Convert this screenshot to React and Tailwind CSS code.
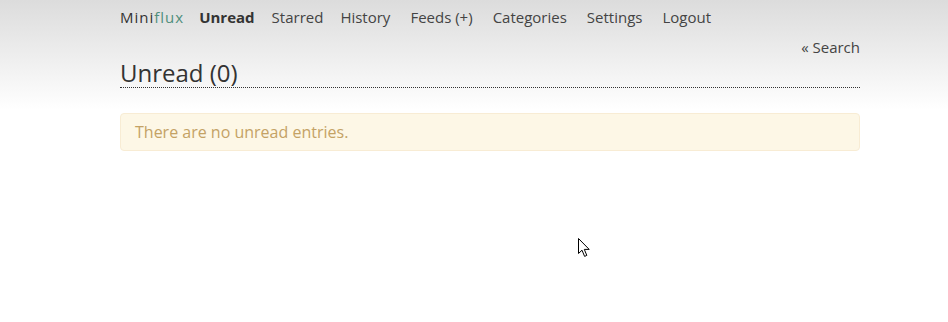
import React from "react"

const NAV = ["Starred", "History", "Feeds (+)", "Categories", "Settings", "Logout"]

function Cursor() {
  return (
    <svg className="absolute left-[578px] top-[238px]" width="13" height="20" viewBox="0 0 13 20">
      <path d="M0.5 0.5 L0.5 15.5 L4 12.2 L6.6 18.4 L8.8 17.4 L6.3 11.4 L11.2 11.4 Z" fill="#fff" stroke="#000" strokeWidth="1" />
    </svg>
  )
}

export default function App() {
  return (
    <div className="relative w-[948px] h-[322px] bg-white overflow-hidden" style={{ fontFamily: '"Open Sans", "Noto Sans", sans-serif' }}>
      <div className="bg-gradient-to-b from-[#dcdcdc] to-white h-[110px] absolute inset-x-0 top-0" />
      <div className="relative ml-[120px] w-[740px]">
        <nav className="flex items-center gap-[20px] h-[34px] text-[15px] text-[#444]">
          <span className="tracking-[1px] text-[#333]">
            Mini<span className="text-[#4f8f7c]">flux</span>
          </span>
          <span className="font-bold text-[#333] -ml-[5px]">Unread</span>
          <span className="-ml-[3px] -mr-[3px]">Starred</span>
          {NAV.slice(1).map((n) => (
            <span key={n}>{n}</span>
          ))}
        </nav>
        <div className="flex justify-end text-[15px] text-[#444] leading-[26px]">« Search</div>
        <h1 className="text-[24px] leading-[25px] pb-[2px] text-[#333] border-b border-dotted border-[#333]">Unread (0)</h1>
        <div className="mt-[25px] h-[38px] flex items-center px-[14px] bg-[#fdf7e6] border border-[#f8ecd4] rounded-[4px] text-[16px] text-[#c4a265]">
          There are no unread entries.
        </div>
      </div>
      <Cursor />
    </div>
  )
}
